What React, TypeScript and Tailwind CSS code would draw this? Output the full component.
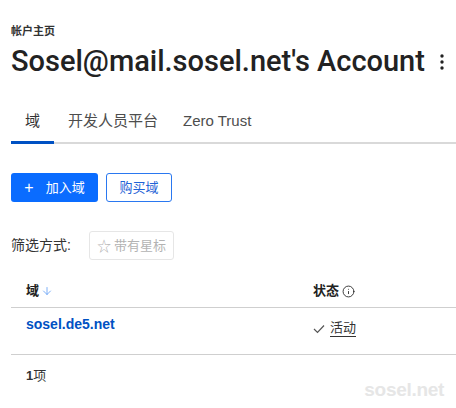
import { ArrowDown, Info } from "lucide-react";

const FONT = { fontFamily: '"Liberation Sans", "Noto Sans CJK SC", sans-serif' };
const TITLE_FONT = { fontFamily: 'Roboto, "Liberation Sans", sans-serif' };

function Kebab() {
  return (
    <svg width="4" height="16" viewBox="0 0 4 16" className="text-[#222]">
      <circle cx="2" cy="2" r="1.7" fill="currentColor" />
      <circle cx="2" cy="8" r="1.7" fill="currentColor" />
      <circle cx="2" cy="14" r="1.7" fill="currentColor" />
    </svg>
  );
}

export default function App() {
  return (
    <div className="relative h-[408px] w-[456px] overflow-hidden bg-white pl-[11px]" style={FONT}>
      <div className="pt-[24px] text-[11px] font-bold leading-[14px] text-[#333]">帐户主页</div>
      <div className="mt-[6px] flex items-center pr-[11px]">
        <h1 className="text-[29px] font-medium leading-[34px] text-[#222]" style={TITLE_FONT}>
          Sosel@mail.sosel.net's Account
        </h1>
        <div className="ml-auto mr-[1px] pt-[1px]">
          <Kebab />
        </div>
      </div>

      <div className="mt-[26px] flex border-b-2 border-[#d9d9d9] text-[15px] text-[#4d4d4d]">
        <div className="-mb-[2px] flex h-[40px] w-[43px] items-start justify-center border-b-[3px] border-[#0051c3] pt-[6px] text-[#333]">
          域
        </div>
        <div className="ml-[14px] pt-[6px]">开发人员平台</div>
        <div className="ml-[25px] pt-[6px]">Zero Trust</div>
      </div>

      <div className="mt-[29px] flex gap-[8px] text-[13px]">
        <button className="flex h-[29px] w-[87px] items-center justify-center gap-[12px] rounded-[3px] bg-[#0a6cff] text-white">
          <span className="text-[16px] font-light leading-none">+</span>
          <span>加入域</span>
        </button>
        <button className="flex h-[29px] w-[66px] items-center justify-center rounded-[3px] border border-[#2a78f0] text-[#1f63d6]">
          购买域
        </button>
      </div>

      <div className="mt-[29px] flex items-center text-[14px] text-[#333]">
        <span>筛选方式:</span>
        <div className="ml-[18px] flex h-[29px] w-[85px] items-center justify-center gap-[3px] rounded-[3px] border border-[#e6e6e6] text-[13px] text-[#b3b3b3]">
          <span className="text-[14px] leading-none">☆</span>
          <span>带有星标</span>
        </div>
      </div>

      <div className="mt-[15px] text-[13px]">
        <div className="flex h-[33px] items-center border-b border-[#cfcfcf] pl-[15px] font-bold text-[#222]">
          <div className="flex w-[287px] items-center gap-[2px]">
            <span>域</span>
            <ArrowDown size={12} strokeWidth={1.6} className="text-[#5d9cf5]" />
          </div>
          <div className="flex items-center gap-[3px]">
            <span>状态</span>
            <Info size={13} strokeWidth={1.6} className="text-[#222]" />
          </div>
        </div>
        <div className="flex h-[47px] items-start border-b border-[#cfcfcf] pl-[15px]">
          <div className="w-[287px] pt-[6px] text-[14px] font-bold text-[#0051c3]">sosel.de5.net</div>
          <div className="flex items-center gap-[5px] pt-[12px] text-[#333]">
            <svg width="12" height="10" viewBox="0 0 12 10">
              <path d="M1 5 L4.5 8.5 L11 1.5" fill="none" stroke="#555" strokeWidth="1.2" />
            </svg>
            <span className="border-b border-[#333] leading-[16px]">活动</span>
          </div>
        </div>
        <div className="pl-[15px] pt-[11px] text-[#333]">
          <span className="font-bold">1</span>项
        </div>
      </div>

      <div className="absolute bottom-[4px] right-[12px] text-[19px] font-bold tracking-[-0.3px] text-[#e6e6e6]">
        sosel.net
      </div>
    </div>
  );
}
